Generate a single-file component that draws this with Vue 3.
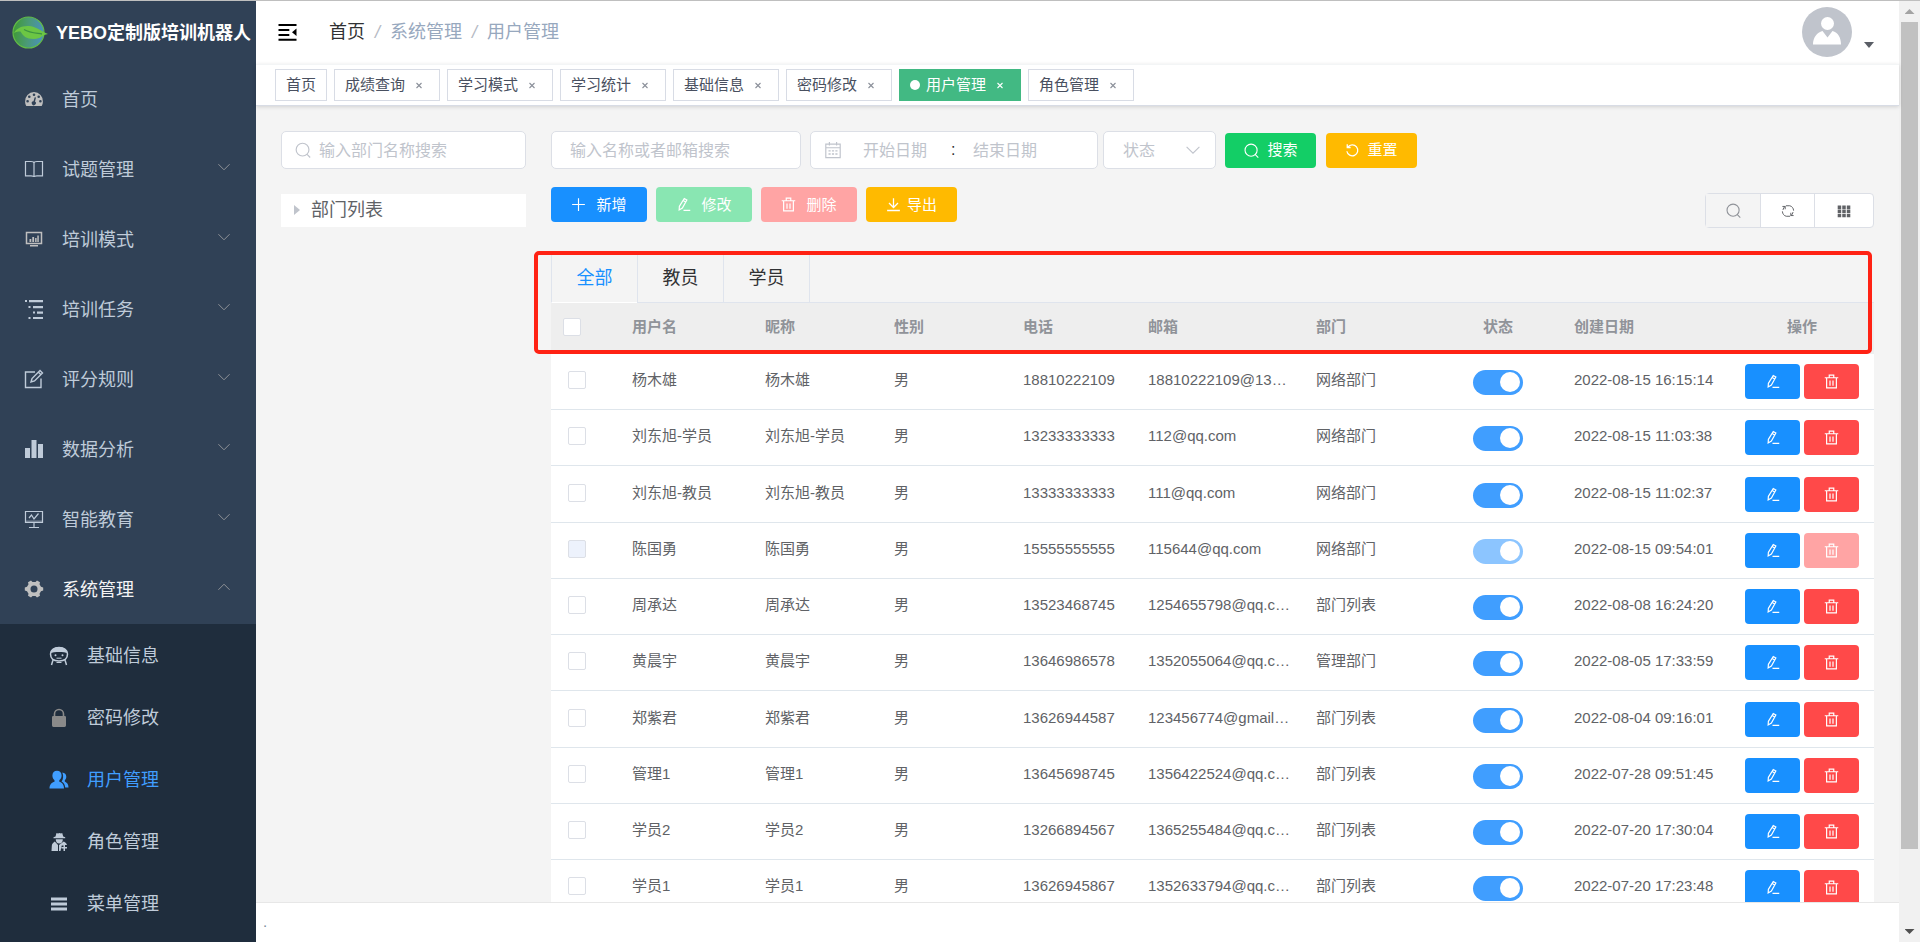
<script setup>
import { ref, h } from 'vue'

const stroke = (d, w = 1.2, extra = {}) => ({ d, fill: 'none', stroke: 'currentColor', 'stroke-width': w, ...extra })
const fill = (d, extra = {}) => ({ d, fill: 'currentColor', 'fill-rule': 'evenodd', ...extra })

const shapes = {
  dashboard: [fill('M10 3a9 9 0 0 1 8.9 9.6c0 1.800-.5 3.400-1.200 4.400H2.300C1.600 16 1.100 14.400 1.100 12.600A9 9 0 0 1 10 3zM10 4.500a1.300 1.300 0 1 0 0 2.600 1.300 1.300 0 0 0 0-2.600zM5.300 6.500a1.300 1.300 0 1 0 0 2.600 1.300 1.300 0 0 0 0-2.600zM14.700 6.500a1.300 1.300 0 1 0 0 2.600 1.300 1.300 0 0 0 0-2.600zM3.600 11a1.300 1.300 0 1 0 0 2.600 1.300 1.300 0 0 0 0-2.600zM16.400 11a1.300 1.300 0 1 0 0 2.600 1.300 1.300 0 0 0 0-2.600zM10.700 8.200l-1.200 4a2 2 0 1 0 1.500.4l1-4z')],
  book: [stroke('M1.500 2.500h5.500c2 0 3 .6 3 1.500v14c0-.8-1-1.200-3-1.200H1.500zM18.500 2.500H13c-2 0-3 .6-3 1.500v14c0-.8 1-1.200 3-1.200h5.500z')],
  chartScreen: [stroke('M2.500 3.500h15v11h-15z', 1.500), fill('M5.500 10h1.800v3H5.500zM8.300 8h1.800v5H8.300zM11.100 9h1.500v4h-1.500zM13.300 6.500h1.500V13h-1.500zM6 16h8v1.500H6z')],
  tree: [fill('M1 1h2v2H1zM5 1h14v2.200H5zM4.500 7h2v2h-2zM9 7h10v2.200H9zM9 12.500h2v2H9zM13 12.500h6v2.200h-6zM4.500 18h2v2h-2zM9 18h10v2H9z')],
  edit: [stroke('M11 3H1.500v15.500H17V9.500', 1.400), stroke('M7 13l1-3.500 8-8 2.500 2.500-8 8zM14.500 3.200l2.300 2.300', 1.400)],
  bars: [fill('M1 9h5v10H1zM7.500 1h5v18h-5zM14 5h5v14h-5z')],
  monitor: [stroke('M1.500 2.500h17v11h-17zM10 13.500v5M5 18.500h10', 1.200), stroke('M5 9l2.500-3 2.500 4 4.500-5.500', 1.200), fill('M1.500 11.500h17v1.500h-17z', { opacity: 0.5 })],
  gear: [fill('M7 1.500l1.500 1.500h3L13 1.500l3 1.700-.5 2.100 1.500 2.500 2.200.8v2.800l-2.200.8-1.500 2.500.5 2.100-3 1.700-1.500-1.500h-3L7 18.500l-3-1.700.5-2.100L3 12.200l-2.200-.8V8.600L3 7.800l1.500-2.500L4 3.200zM10 6.500a3.500 3.500 0 1 0 0 7 3.500 3.500 0 0 0 0-7z')],
  face: [stroke('M10 1.500c-5 0-8.500 2.500-8.500 6.500 0 5 4 7 8.500 7s8.500-2 8.500-7c0-4-3.500-6.500-8.500-6.500zM4 14l-1.500 5M16 14l1.500 5', 1.500), fill('M10 1C5 1 2 3.500 1.500 7c3-1.500 14-1.500 17 0C18 3.500 15 1 10 1zM6.500 8.300a1 1 0 1 0 0 2 1 1 0 0 0 0-2zM13.500 8.300a1 1 0 1 0 0 2 1 1 0 0 0 0-2z'), stroke('M7.500 12.200h5M7.500 16.500h5', 1)],
  lock: [stroke('M5.500 9V6a4.500 4.500 0 0 1 9 0v3', 1.600), fill('M4.200 8h11.600a1.200 1.200 0 0 1 1.200 1.200v8.300a1.800 1.800 0 0 1-1.800 1.500H4.800A1.800 1.800 0 0 1 3 17.500V9.200A1.200 1.200 0 0 1 4.200 8z')],
  people: [fill('M8 .8c2.800 0 4.600 2 4.600 4.800 0 2-.9 3.800-2.300 4.700v1.400c2.500.8 4.700 2.300 4.700 6.800H.5c0-4.500 2.500-6 5-6.800v-1.400C4.200 9.400 3.400 7.600 3.400 5.600 3.400 2.800 5.200.8 8 .8zM13.300 2.500c2.400.2 4 1.900 4 4.200 0 1.500-.6 2.700-1.500 3.500v1.200c2 1 3.700 2.600 3.700 6h-3.300c-.2-2.900-1.500-4.800-3.600-6 1.600-2 2.200-5.500.7-8.900z')],
  agent: [fill('M7.500 1l1.500.6L10.500 1l1.500.6 1.200-.6 1 3.500 2 .8v1H4.500v-1l2-.8zM6.800 7.200h7c.2 2-1 4.300-3.500 4.300S6.600 9.200 6.800 7.200zM5.800 9.500L9 13v6H2.500l.3-5c.1-2 1.200-3.300 3-4.500zM14.800 9.500c1.500.7 3 2 3.200 3.500h-2v2h2v1.500h-2V19h-1.500v-2.500h-2V15h2v-1.500h-1.800L11.500 19H10v-6z')],
  menu: [fill('M2 3.500h16v3H2zM2 8.500h16v3H2zM2 13.500h16v3H2z')],
  search: [stroke('M9.500 2.500a7 7 0 1 0 0 14.200 7 7 0 0 0 0-14.200zM14.500 14.800l3.500 3.500', 1.300)],
  plus: [stroke('M10 1.500v17M1.500 10h17', 1.500)],
  pen: [stroke('M4.500 12.500L11 2l3.500 2-6 10.700-4.300 2.500zM9.500 4.800l3.400 2M10 17.800h9', 1.600)],
  trash: [stroke('M1 5h18M7 4.500v-3h6v3M3.500 5.500v13h13v-13M8 8.500v7M12 8.500v7', 1.600)],
  download: [stroke('M10 1.500v12M4 8l6 6 6-6M1.500 18h17', 1.700)],
  reset: [stroke('M3.800 5.500A7.300 7.300 0 1 1 2.500 11M3 1.800V6h4.500', 1.700)],
  refresh: [stroke('M7 2.500h5.500c3 .6 5.500 3.500 5.500 7M2 10.500c0 3.500 2.500 6.500 5.500 7H13M2 3.500h4v4M2.800 8.500c.3-2 1.300-3.800 3-5M18 16.500h-4v-4M17.200 11.500c-.3 2-1.300 3.800-3 5', 1.400)],
  grid: [fill('M1 2h5v5H1zM7.500 2h5v5h-5zM14 2h5v5h-5zM1 8h5v5H1zM7.500 8h5v5h-5zM14 8h5v5h-5zM1 14h5v5H1zM7.500 14h5v5h-5zM14 14h5v5h-5z')],
  calendar: [stroke('M2 3.500h16v15H2zM2 7.500h16M6 1v4M14 1v4', 1.300), stroke('M5 11h10M5 14.500h10', 1.600, { 'stroke-dasharray': '2.400 1.400' })],
  down: [stroke('M2 6l8 8 8-8', 1.400)],
  up: [stroke('M2 14l8-8 8 8', 1.400)],
  fold: [fill('M0 1h20v2.200H0zM0 6.700h12v2.200H0zM0 12.200h12v2.200H0zM0 17.500h20v2.200H0zM20 6v8.500l-5-4.200z')]
}

const Icon = (props) =>
  h('svg', { viewBox: '0 0 20 20', 'aria-hidden': 'true' }, shapes[props.name].map((p) => h('path', p)))
Icon.props = ['name']

const menu = [
  { label: '首页', icon: 'dashboard', leaf: true, tone: 'warm' },
  { label: '试题管理', icon: 'book' },
  { label: '培训模式', icon: 'chartScreen', tone: 'warm' },
  { label: '培训任务', icon: 'tree' },
  { label: '评分规则', icon: 'edit' },
  { label: '数据分析', icon: 'bars' },
  { label: '智能教育', icon: 'monitor' },
  { label: '系统管理', icon: 'gear', open: true, tone: 'warm' }
]
const submenu = [
  { label: '基础信息', icon: 'face' },
  { label: '密码修改', icon: 'lock', tone: 'dim' },
  { label: '用户管理', icon: 'people', active: true },
  { label: '角色管理', icon: 'agent' },
  { label: '菜单管理', icon: 'menu' }
]
const tags = ['首页', '成绩查询', '学习模式', '学习统计', '基础信息', '密码修改', '用户管理', '角色管理']
const activeTag = '用户管理'

const roles = ['全部', '教员', '学员']
const role = ref('全部')

const row = (name, phone, mail, dept, date, locked = false) => ({ name, phone, mail, dept, date, locked, on: true, checked: false })
const rows = ref([
  row('杨木雄', '18810222109', '18810222109@139.com', '网络部门', '2022-08-15 16:15:14'),
  row('刘东旭-学员', '13233333333', '112@qq.com', '网络部门', '2022-08-15 11:03:38'),
  row('刘东旭-教员', '13333333333', '111@qq.com', '网络部门', '2022-08-15 11:02:37'),
  row('陈国勇', '15555555555', '115644@qq.com', '网络部门', '2022-08-15 09:54:01', true),
  row('周承达', '13523468745', '1254655798@qq.com', '部门列表', '2022-08-08 16:24:20'),
  row('黄晨宇', '13646986578', '1352055064@qq.com', '管理部门', '2022-08-05 17:33:59'),
  row('郑紫君', '13626944587', '123456774@gmail.com', '部门列表', '2022-08-04 09:16:01'),
  row('管理1', '13645698745', '1356422524@qq.com', '部门列表', '2022-07-28 09:51:45'),
  row('学员2', '13266894567', '1365255484@qq.com', '部门列表', '2022-07-20 17:30:04'),
  row('学员1', '13626945867', '1352633794@qq.com', '部门列表', '2022-07-20 17:23:48')
])
</script>

<template>
  <div class="app">
    <aside class="sidebar">
      <a class="brand" href="#">
        <svg class="logo" viewBox="0 0 36 33" aria-hidden="true">
          <defs>
            <linearGradient id="globe" x1="0" y1="0.4" x2="1" y2="0.5">
              <stop offset="0" stop-color="#3f9a35" />
              <stop offset="0.5" stop-color="#4b9a78" />
              <stop offset="1" stop-color="#4a90c0" />
            </linearGradient>
          </defs>
          <circle cx="16.500" cy="16.500" r="15.500" fill="url(#globe)" stroke="#62bb46" stroke-width="1.200" />
          <path d="M2 17C5 11 14 8 23 11.500c5 1.800 8 5 13 6.500-6 .8-7 5-14 5-8 0-11-3-13.500-7.500-2 0-4.500 0-6.500 1.500z" fill="#6cc644" />
          <path d="M12 13.500c6 3.500 12 3.500 18 4.500" fill="none" stroke="#3c9440" stroke-width="1.300" />
        </svg>
        <span>YEBO定制版培训机器人</span>
      </a>
      <nav>
        <a v-for="m in menu" :key="m.label" href="#" class="item" :class="{ open: m.open }">
          <Icon :name="m.icon" class="micon" :class="m.tone" />
          <span>{{ m.label }}</span>
          <Icon v-if="!m.leaf" :name="m.open ? 'up' : 'down'" class="chev" />
        </a>
        <div class="submenu">
          <a v-for="m in submenu" :key="m.label" href="#" class="subitem" :class="{ active: m.active }">
            <Icon :name="m.icon" class="micon" :class="m.tone" />
            <span>{{ m.label }}</span>
          </a>
        </div>
      </nav>
    </aside>

    <main class="main">
      <header class="topbar">
        <button class="fold" aria-label="折叠菜单"><Icon name="fold" /></button>
        <nav class="crumbs">
          <a href="#" class="home">首页</a><i>/</i><a href="#">系统管理</a><i>/</i><span>用户管理</span>
        </nav>
        <button class="user" aria-label="用户菜单">
          <svg class="avatar" viewBox="0 0 50 50" aria-hidden="true">
            <circle cx="25" cy="25" r="25" fill="#c0c4cc" />
            <circle cx="25.500" cy="16.500" r="6.500" fill="#fff" />
            <path d="M11 37.500c0-7 4-12 9.500-13.500l5 6.500 5-6.500C36 25.500 39 30.500 39 37.500z" fill="#fff" />
          </svg>
          <span class="caret"></span>
        </button>
      </header>

      <div class="tags">
        <a v-for="t in tags" :key="t" href="#" class="tag" :class="{ active: t === activeTag }">
          <span v-if="t === activeTag" class="dot"></span>{{ t }}
          <svg v-if="t !== '首页'" class="close" viewBox="0 0 20 20" aria-hidden="true">
            <path d="M7.500 8l5 5M12.500 8l-5 5" stroke="currentColor" stroke-width="1.100" />
          </svg>
        </a>
      </div>

      <section class="content">
        <div class="depts">
          <label class="field">
            <Icon name="search" />
            <input type="text" placeholder="输入部门名称搜索" aria-label="输入部门名称搜索" />
          </label>
          <button class="node"><span class="tri"></span>部门列表</button>
        </div>

        <div class="users">
          <form class="filters" @submit.prevent>
            <div class="field name"><input type="text" placeholder="输入名称或者邮箱搜索" aria-label="名称或邮箱" /></div>
            <div class="field range">
              <Icon name="calendar" />
              <input type="text" placeholder="开始日期" aria-label="开始日期" />
              <span>:</span>
              <input type="text" placeholder="结束日期" aria-label="结束日期" />
            </div>
            <div class="field state">
              <select aria-label="状态">
                <option>状态</option>
              </select>
              <Icon name="down" />
            </div>
            <button class="btn green find"><Icon name="search" />搜索</button>
            <button class="btn amber" type="reset"><Icon name="reset" />重置</button>
          </form>

          <div class="actions">
            <div class="left">
              <button class="btn blue wide"><Icon name="plus" />新增</button>
              <button class="btn green wide" disabled><Icon name="pen" />修改</button>
              <button class="btn red wide" disabled><Icon name="trash" />删除</button>
              <button class="btn amber export"><Icon name="download" />导出</button>
            </div>
            <div class="tools">
              <button class="pressed" aria-label="搜索"><Icon name="search" /></button>
              <button aria-label="刷新"><Icon name="refresh" /></button>
              <button class="cols" aria-label="列设置"><Icon name="grid" /></button>
            </div>
          </div>

          <div class="panel">
            <div class="tabs" role="tablist">
              <button v-for="r in roles" :key="r" role="tab" :aria-selected="r === role" :class="{ active: r === role }" @click="role = r">{{ r }}</button>
              <span class="rest"></span>
            </div>
            <table>
              <colgroup>
                <col class="c-check" /><col class="c-user" /><col class="c-nick" /><col class="c-nick" /><col class="c-phone" />
                <col class="c-mail" /><col class="c-dept" /><col class="c-state" /><col class="c-mail" /><col class="c-ops" />
              </colgroup>
              <thead>
                <tr>
                  <th class="check"><input type="checkbox" class="box" aria-label="全选" /></th>
                  <th>用户名</th>
                  <th>昵称</th>
                  <th>性别</th>
                  <th>电话</th>
                  <th>邮箱</th>
                  <th>部门</th>
                  <th class="mid">状态</th>
                  <th>创建日期</th>
                  <th class="mid">操作</th>
                </tr>
              </thead>
              <tbody>
                <tr v-for="r in rows" :key="r.phone">
                  <td class="check"><input v-model="r.checked" type="checkbox" class="box" :disabled="r.locked" :aria-label="'选择' + r.name" /></td>
                  <td>{{ r.name }}</td>
                  <td>{{ r.name }}</td>
                  <td>男</td>
                  <td>{{ r.phone }}</td>
                  <td>{{ r.mail }}</td>
                  <td>{{ r.dept }}</td>
                  <td class="toggle"><input v-model="r.on" type="checkbox" role="switch" class="switch" :disabled="r.locked" :aria-label="r.name + '状态'" /></td>
                  <td>{{ r.date }}</td>
                  <td class="ops">
                    <div>
                      <button class="btn blue" aria-label="修改"><Icon name="pen" /></button>
                      <button class="btn red" aria-label="删除" :disabled="r.locked"><Icon name="trash" /></button>
                    </div>
                  </td>
                </tr>
              </tbody>
            </table>
            <div class="highlight"></div>
          </div>
        </div>
      </section>

      <footer class="footer">.</footer>
    </main>

    <div class="scrollbar" aria-hidden="true">
      <span class="arrow up"></span>
      <span class="track"><span class="thumb"></span></span>
      <span class="arrow down"></span>
    </div>
  </div>
</template>

<style>
body {
  margin: 0;
  overflow: hidden;
}
</style>

<style scoped>
* {
  box-sizing: border-box;
}
.app {
  display: flex;
  height: 100vh;
  border-top: 1px solid #bfbfbf;
  font: 15px/24px "Liberation Sans", "Noto Sans CJK SC", sans-serif;
  color: #606266;
  background: #f4f4f4;
}
a {
  color: inherit;
  text-decoration: none;
}
button,
input,
select {
  font: inherit;
  color: inherit;
  margin: 0;
  padding: 0;
  border: 0;
  background: none;
}
svg {
  flex: none;
  display: block;
}

/* sidebar */
.sidebar {
  flex: none;
  width: 256px;
  background: #304156;
  overflow: hidden;
  display: flex;
  flex-direction: column;
}
.brand {
  flex: none;
  display: flex;
  align-items: center;
  gap: 8px;
  height: 63px;
  padding-left: 12px;
  color: #fff;
  font-size: 18px;
  font-weight: 700;
  white-space: nowrap;
}
.logo {
  width: 36px;
  height: 33px;
}
.sidebar nav {
  flex: 1;
  display: flex;
  flex-direction: column;
  font-size: 18px;
  color: #bfcbd9;
}
.item {
  flex: none;
  display: flex;
  align-items: center;
  height: 70px;
  padding: 0 25px 0 24px;
}
.item span {
  padding-top: 2px;
}
.item.open {
  color: #f4f4f5;
}
.micon {
  width: 20px;
  height: 20px;
  margin-right: 18px;
}
.warm {
  color: #bfbfbf;
}
.dim {
  color: #8a8a8a;
}
.chev {
  width: 14px;
  height: 14px;
  margin-left: auto;
  margin-bottom: 4px;
  color: #909399;
}
.submenu {
  flex: 1;
  padding-top: 1px;
  background: #1f2d3d;
  display: grid;
  grid-auto-rows: 62px;
}
.subitem {
  display: flex;
  align-items: center;
  padding-left: 49px;
}
.subitem.active {
  color: #409eff;
}

/* top bar */
.main {
  flex: 1;
  min-width: 0;
  display: flex;
  flex-direction: column;
}
.topbar {
  flex: none;
  display: flex;
  align-items: center;
  height: 63px;
  padding: 0 25px 2px 21px;
  background: #fff;
}
.fold {
  width: 21px;
  height: 18px;
  color: #000;
}
.fold svg {
  width: 21px;
  height: 18px;
}
.crumbs {
  margin-left: 31px;
  font-size: 18px;
  color: #97a8be;
  display: flex;
}
.crumbs .home {
  color: #303133;
}
.crumbs i {
  width: 25px;
  text-align: center;
  color: #b5bac4;
}
.user {
  margin-left: auto;
  display: flex;
  align-items: center;
  gap: 12px;
}
.avatar {
  width: 50px;
  height: 50px;
}
.caret {
  margin-top: 32px;
  border: 5px solid transparent;
  border-top: 6px solid #5a5e66;
}

/* visited pages */
.tags {
  flex: none;
  display: flex;
  gap: 7px;
  height: 42px;
  padding: 4px 19px 0;
  background: #fff;
  border-top: 1px solid #f3f5f6;
  border-bottom: 1px solid #d8dce5;
  box-shadow: 0 1px 4px rgba(0, 0, 0, 0.14);
  z-index: 1;
}
.tag {
  display: flex;
  align-items: center;
  height: 32px;
  padding: 0 10px;
  border: 1px solid #d8dce5;
  color: #495060;
  white-space: nowrap;
}
.close {
  width: 20px;
  height: 20px;
  margin-left: 4px;
  color: #8a8f99;
}
.tag.active {
  background: #42b983;
  border-color: #42b983;
  color: #fff;
}
.tag.active .close {
  color: #fff;
}
.dot {
  width: 10px;
  height: 10px;
  margin-right: 6px;
  border-radius: 50%;
  background: #fff;
}

/* content */
.content {
  flex: 1;
  min-height: 0;
  overflow: hidden;
  display: grid;
  grid-template-columns: 245px minmax(0, 1fr);
  gap: 25px;
  padding: 25px 25px 0;
}
.field {
  display: flex;
  align-items: center;
  height: 38px;
  border: 1px solid #dcdfe6;
  border-radius: 5px;
  background: #fff;
  font-size: 16px;
  color: #c0c4cc;
}
.field input,
.field select {
  width: 100%;
  min-width: 0;
  padding-top: 2px;
  outline: none;
}
.field input::placeholder {
  color: #c0c4cc;
  opacity: 1;
}
.depts .field {
  padding: 0 12px;
  gap: 7px;
}
.depts .field svg {
  width: 18px;
  height: 18px;
}
.node {
  display: flex;
  align-items: center;
  width: 100%;
  height: 33px;
  margin-top: 25px;
  padding: 0 13px 2px;
  background: #fff;
  font-size: 18px;
}
.tri {
  border: 5px solid transparent;
  border-left: 6px solid #c0c4cc;
  margin-right: 6px;
}
.filters {
  display: flex;
  align-items: center;
}
.name {
  width: 250px;
  padding: 0 18px;
  margin-right: 9px;
}
.range {
  width: 288px;
  padding: 0 10px 0 13px;
  margin-right: 5px;
}
.range svg {
  width: 18px;
  height: 18px;
  margin-right: 21px;
}
.range input {
  width: 78px;
}
.range span {
  width: 32px;
  padding-left: 10px;
  color: #303133;
}
.state {
  width: 113px;
  padding: 0 14px 0 19px;
  margin-right: 9px;
}
.state select {
  flex: 1;
  appearance: none;
}
.state svg {
  width: 16px;
  height: 16px;
}
.btn {
  display: inline-flex;
  align-items: center;
  justify-content: center;
  gap: 7px;
  min-width: 91px;
  height: 35px;
  border-radius: 4px;
  color: #fff;
}
.btn svg {
  width: 15px;
  height: 15px;
}
.find {
  margin-right: 10px;
}
.blue {
  background: #1890ff;
}
.green {
  background: #13ce66;
}
.green:disabled {
  background: #89e6b2;
}
.red {
  background: #ff4949;
}
.red:disabled {
  background: #ffa4a4;
}
.amber {
  background: #ffba00;
}
.actions {
  display: flex;
  justify-content: space-between;
  height: 41px;
  margin-top: 18px;
}
.left {
  display: flex;
  gap: 9px;
}
.wide {
  min-width: 96px;
  gap: 10px;
}
.export {
  gap: 6px;
}
.tools {
  display: flex;
  align-self: flex-end;
  height: 35px;
  border: 1px solid #dcdfe6;
  border-radius: 4px;
  background: #fff;
}
.tools button {
  display: flex;
  align-items: center;
  justify-content: center;
  width: 54px;
}
.tools button + button {
  border-left: 1px solid #dcdfe6;
}
.tools .cols {
  width: 59px;
}
.tools .pressed {
  background: #f4f4f4;
  color: #909399;
}
.tools svg {
  width: 14px;
  height: 14px;
}
.find svg,
.tools .pressed svg {
  width: 17px;
  height: 17px;
}

/* tabs and table */
.panel {
  position: relative;
  margin-top: 24px;
}
.tabs {
  display: flex;
  height: 51px;
}
.tabs button {
  width: 86px;
  padding-top: 2px;
  border-left: 1px solid #dfe4ed;
  border-bottom: 1px solid #dfe4ed;
  font-size: 18px;
  color: #303133;
}
.tabs .active {
  color: #1890ff;
  border-bottom-color: #fff;
}
.rest {
  flex: 1;
  border-left: 1px solid #dfe4ed;
  border-bottom: 1px solid #dfe4ed;
}
table {
  width: 100%;
  table-layout: fixed;
  border-collapse: separate;
  border-spacing: 0;
  background: #fff;
}
.c-check { width: 69px; }
.c-user { width: 133px; }
.c-nick { width: 129px; }
.c-phone { width: 125px; }
.c-mail { width: 168px; }
.c-dept { width: 130px; }
.c-state { width: 128px; }
.c-ops { width: 144px; }
th,
td {
  padding: 0 12px 3px;
  text-align: left;
  white-space: nowrap;
  overflow: hidden;
  text-overflow: ellipsis;
}
th {
  height: 51px;
  background: #eee;
  color: #909399;
  font-weight: 700;
}
td {
  height: 56px;
  border-bottom: 1px solid #dfe6ec;
}
tr:nth-child(4n + 3) td {
  height: 57px;
}
.mid {
  text-align: center;
}
td.check {
  padding-left: 17px;
}
td.ops {
  padding-bottom: 0;
}
td.toggle {
  padding: 2px 0 0;
}
.box {
  appearance: none;
  display: block;
  width: 18px;
  height: 18px;
  border: 1px solid #dcdfe6;
  border-radius: 2px;
  background: #fff;
}
.box:checked {
  background: #409eff;
}
.box:disabled {
  background: #edf2fc;
}
.switch {
  appearance: none;
  display: block;
  width: 50px;
  height: 25px;
  margin: 0 auto;
  padding: 2px;
  border-radius: 13px;
  background: #c0ccda;
}
.switch::before {
  content: "";
  display: block;
  width: 20px;
  height: 20px;
  border-radius: 50%;
  background: #fff;
}
.switch:checked {
  background: #409eff;
  padding-left: 27px;
}
.switch:disabled {
  background: #8cc5ff;
}
.ops div {
  display: flex;
  justify-content: center;
  gap: 4px;
}
.ops .btn {
  min-width: 55px;
}
.highlight {
  position: absolute;
  inset: -1px 2px auto -17px;
  height: 103px;
  border: 4px solid #ff2214;
  border-radius: 5px;
  pointer-events: none;
}

.footer {
  flex: none;
  height: 40px;
  padding: 7px;
  border-top: 1px solid #e7e7e7;
  background: #fff;
  font-size: 15px;
  line-height: 24px;
  color: #7a8b9a;
}

/* page scrollbar */
.scrollbar {
  flex: none;
  display: flex;
  flex-direction: column;
  align-items: center;
  width: 21px;
  background: #f1f1f1;
}
.arrow {
  flex: none;
  width: 10px;
  height: 5px;
  margin: 8px 0;
  background: #505050;
}
.arrow.up {
  background: #a3a3a3;
  clip-path: polygon(50% 0, 100% 100%, 0 100%);
}
.arrow.down {
  clip-path: polygon(0 0, 100% 0, 50% 100%);
}
.track {
  flex: 1;
  width: 17px;
}
.thumb {
  display: block;
  height: 92%;
  background: #c1c1c1;
}
</style>
